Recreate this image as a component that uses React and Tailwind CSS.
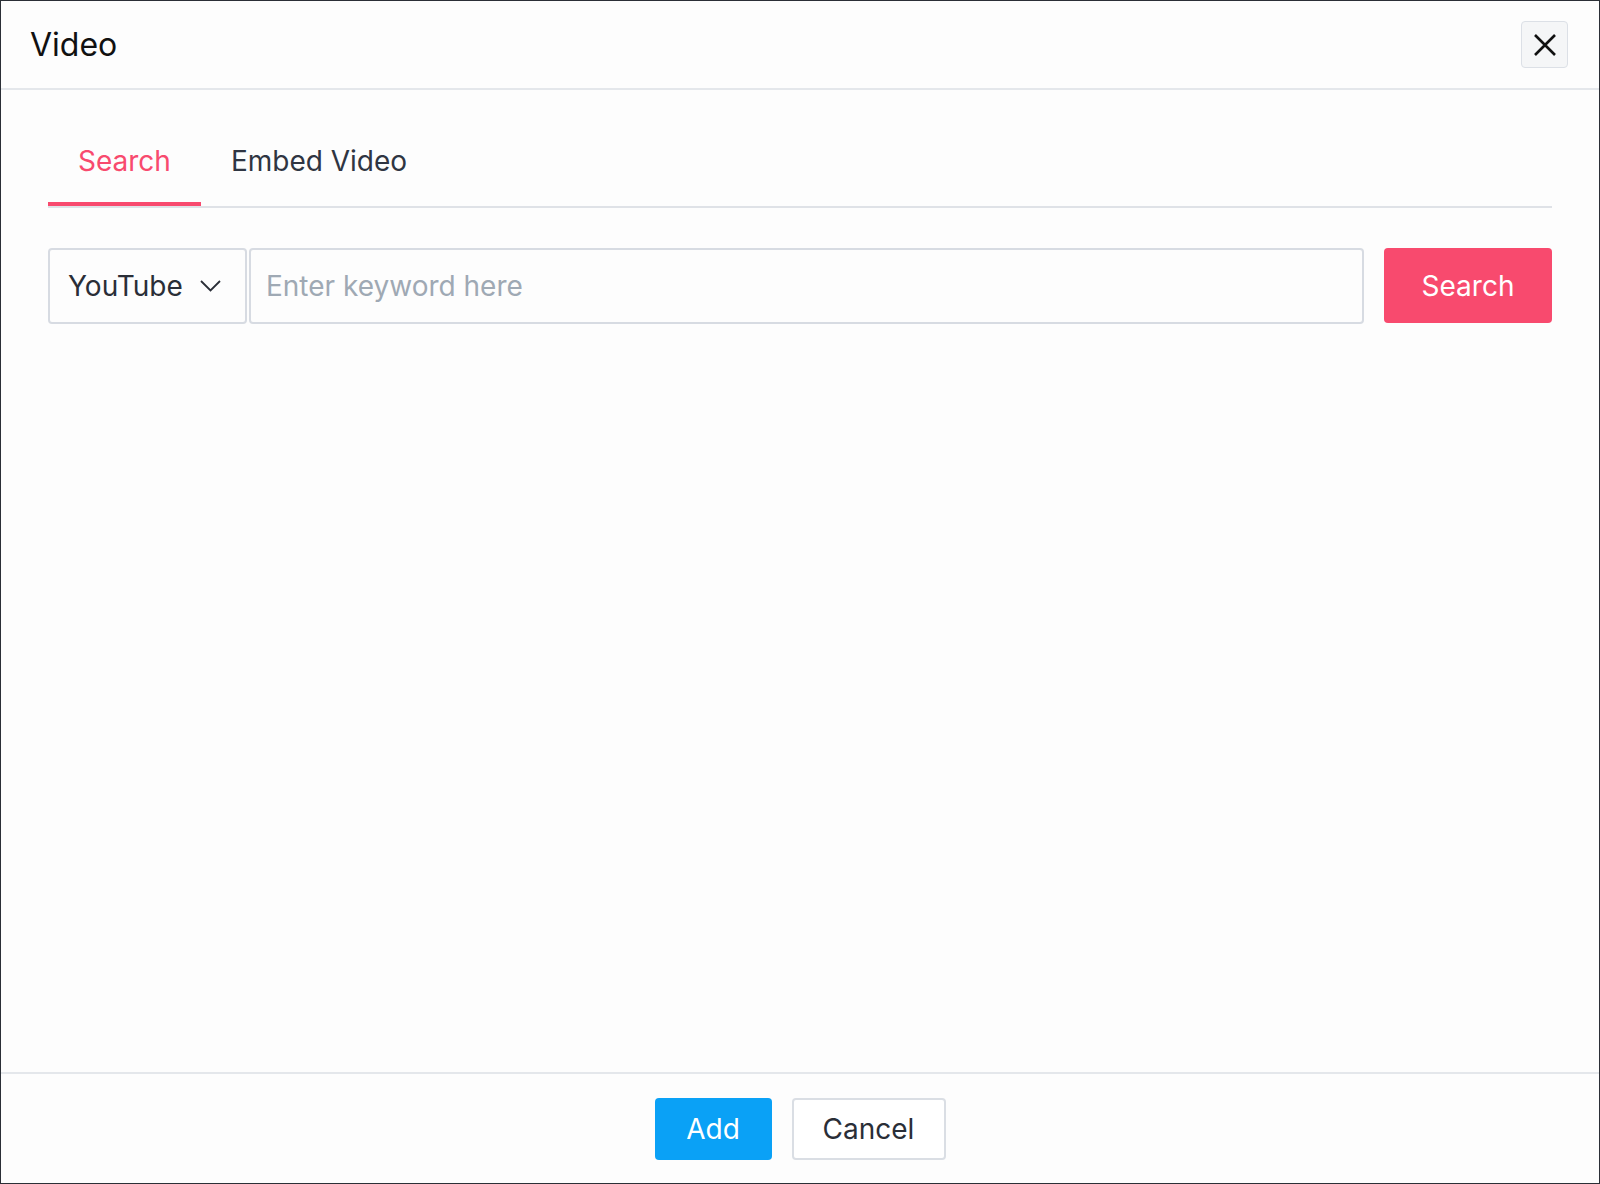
import React, { useState } from 'react';

// Video picker dialog: search a provider or paste an embed code
const TABS = ['Search', 'Embed Video'];

function CloseIcon() {
  return (
    <svg width="22" height="22" viewBox="0 0 22 22" fill="none" stroke="#111" strokeWidth="2.6">
      <path d="M1 1L21 21M21 1L1 21" />
    </svg>
  );
}

function Chevron() {
  return (
    <svg width="21" height="12" viewBox="0 0 21 12" fill="none" stroke="#2a2e37" strokeWidth="1.8" strokeLinejoin="miter">
      <path d="M1 1L10.5 10.5L20 1" />
    </svg>
  );
}

export default function App() {
  const [tab, setTab] = useState('Search');
  const [keyword, setKeyword] = useState('');

  return (
    <div className="w-[1600px] h-[1184px] flex flex-col bg-[#fdfdfd] border border-[#2b2f36] font-['Inter','Liberation_Sans',sans-serif] text-[28px]">
      {/* Header */}
      <div className="h-[89px] shrink-0 flex items-center justify-between pl-[29px] pr-[31px] border-b-2 border-[#e4e7eb]">
        <h2 className="text-[32px] text-[#111] leading-none">Video</h2>
        <button className="w-[47px] h-[47px] flex items-center justify-center rounded-[4px] bg-[#f5f6f7] border border-[#dce0e6]">
          <CloseIcon />
        </button>
      </div>

      {/* Body */}
      <div className="flex-1 px-[47px] pt-[29px]">
        <div className="flex border-b-2 border-[#dfe2e7]">
          {TABS.map(t => (
            <button
              key={t}
              onClick={() => setTab(t)}
              className={
                t === tab
                  ? 'px-[30px] pt-[25px] pb-[24px] leading-[34px] border-b-4 border-[#f84a6e] text-[#f84a6e]'
                  : 'px-[30px] pt-[25px] pb-[24px] leading-[34px] border-b-4 border-transparent text-[#2f3542]'
              }
            >
              {t}
            </button>
          ))}
        </div>

        <div className="flex mt-[40px] h-[76px]">
          <div className="w-[199px] h-full flex items-center justify-between pl-[18px] pr-[24px] rounded-[4px] border-2 border-[#d7dbe2] text-[#2a2e37]">
            <span>YouTube</span>
            <Chevron />
          </div>
          <input
            value={keyword}
            onChange={e => setKeyword(e.target.value)}
            placeholder="Enter keyword here"
            className="flex-1 ml-[2px] h-full px-[15px] rounded-[4px] border-2 border-[#d7dbe2] bg-transparent outline-none text-[#2a2e37] placeholder:text-[#9fa9b4]"
          />
          <button className="ml-[20px] w-[168px] h-[75px] rounded-[4px] bg-[#f84a6e] text-white">Search</button>
        </div>
      </div>

      {/* Footer */}
      <div className="h-[111px] shrink-0 flex items-center justify-center gap-[20px] border-t-2 border-[#e4e7eb]">
        <button className="w-[117px] h-[62px] rounded-[4px] bg-[#0aa1f6] text-white">Add</button>
        <button className="w-[154px] h-[62px] rounded-[4px] border-2 border-[#dadee4] bg-white text-[#2a2e37]">Cancel</button>
      </div>
    </div>
  );
}
